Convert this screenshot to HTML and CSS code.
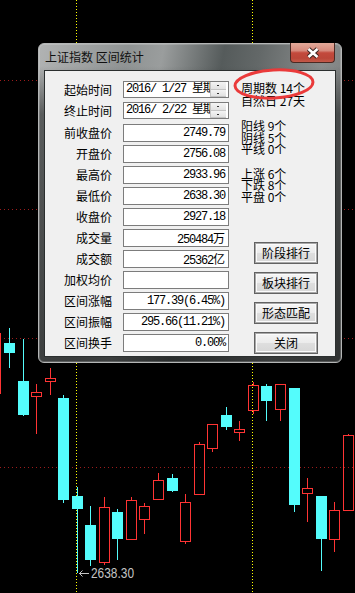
FILE: index.html
```html
<!DOCTYPE html>
<html>
<head>
<meta charset="utf-8">
<title>上证指数 区间统计</title>
<link rel="stylesheet" href="styles.css">
</head>
<body>
<svg class="chart" width="355" height="593" viewBox="0 0 355 593">
    <!-- price grid -->
    <g class="grid-h">
        <line x1="0" y1="80.5" x2="355" y2="80.5"/>
        <line x1="0" y1="209.5" x2="355" y2="209.5"/>
        <line x1="0" y1="338.5" x2="355" y2="338.5"/>
        <line x1="0" y1="467.5" x2="355" y2="467.5"/>
    </g>
    <!-- range start / end markers -->
    <g class="grid-v">
        <line x1="76.5" y1="0" x2="76.5" y2="593"/>
        <line x1="252.5" y1="0" x2="252.5" y2="593"/>
    </g>

    <!-- falling days: filled cyan -->
    <g class="down">
        <line x1="9.5" y1="328" x2="9.5" y2="368"/><rect x="4" y="343" width="11" height="10"/>
        <line x1="23.5" y1="339" x2="23.5" y2="416"/><rect x="18" y="381" width="11" height="34"/>
        <line x1="63.5" y1="395" x2="63.5" y2="503"/><rect x="58" y="398" width="11" height="102"/>
        <line x1="77.5" y1="487" x2="77.5" y2="573"/><rect x="72" y="496" width="11" height="13"/>
        <line x1="90.5" y1="506" x2="90.5" y2="566"/><rect x="85" y="525" width="11" height="35"/>
        <line x1="117.5" y1="509" x2="117.5" y2="560"/><rect x="112" y="512" width="11" height="27"/>
        <line x1="172.5" y1="474" x2="172.5" y2="492"/><rect x="167" y="478" width="11" height="13"/>
        <line x1="226.5" y1="407" x2="226.5" y2="430"/><rect x="221" y="415" width="11" height="12"/>
        <line x1="266.5" y1="384" x2="266.5" y2="421"/><rect x="261" y="386" width="11" height="15"/>
        <line x1="294.5" y1="388" x2="294.5" y2="512"/><rect x="289" y="388" width="11" height="117"/>
        <line x1="321.5" y1="496" x2="321.5" y2="571"/><rect x="316" y="496" width="11" height="43"/>
    </g>

    <!-- rising days: hollow red -->
    <g class="up">
        <line x1="0.5" y1="333" x2="0.5" y2="394"/>
        <line x1="36.5" y1="384" x2="36.5" y2="392"/><line x1="36.5" y1="397" x2="36.5" y2="434"/><rect x="31.5" y="392.5" width="10" height="4"/>
        <line x1="50.5" y1="368" x2="50.5" y2="378"/><line x1="50.5" y1="382" x2="50.5" y2="395"/><rect x="45.5" y="378.5" width="10" height="3"/>
        <line x1="104.5" y1="497" x2="104.5" y2="507"/><line x1="104.5" y1="563" x2="104.5" y2="565"/><rect x="99.5" y="507.5" width="10" height="55"/>
        <line x1="131.5" y1="497" x2="131.5" y2="500"/><rect x="126.5" y="500.5" width="10" height="39"/>
        <line x1="144.5" y1="503" x2="144.5" y2="506"/><line x1="144.5" y1="520" x2="144.5" y2="534"/><rect x="139.5" y="506.5" width="10" height="13"/>
        <line x1="158.5" y1="473" x2="158.5" y2="480"/><rect x="153.5" y="480.5" width="10" height="19"/>
        <line x1="185.5" y1="494" x2="185.5" y2="502"/><line x1="185.5" y1="542" x2="185.5" y2="544"/><rect x="180.5" y="502.5" width="10" height="39"/>
        <line x1="199.5" y1="442" x2="199.5" y2="444"/><rect x="194.5" y="444.5" width="10" height="50"/>
        <line x1="212.5" y1="449" x2="212.5" y2="452"/><rect x="207.5" y="424.5" width="10" height="24"/>
        <line x1="239.5" y1="421" x2="239.5" y2="429"/><line x1="239.5" y1="433" x2="239.5" y2="441"/><rect x="234.5" y="429.5" width="10" height="3"/>
        <line x1="253.5" y1="382" x2="253.5" y2="385"/><line x1="253.5" y1="411" x2="253.5" y2="414"/><rect x="248.5" y="385.5" width="10" height="25"/>
        <line x1="280.5" y1="410" x2="280.5" y2="421"/><rect x="275.5" y="384.5" width="10" height="25"/>
        <line x1="307.5" y1="478" x2="307.5" y2="488"/><line x1="307.5" y1="494" x2="307.5" y2="522"/><rect x="302.5" y="488.5" width="10" height="5"/>
        <line x1="334.5" y1="502" x2="334.5" y2="510"/><line x1="334.5" y1="540" x2="334.5" y2="552"/><rect x="329.5" y="510.5" width="10" height="29"/>
        <line x1="348.5" y1="434" x2="348.5" y2="435"/><rect x="343.5" y="435.5" width="10" height="75"/>
    </g>

    <!-- lowest price in range -->
    <g class="low-mark">
        <line x1="79" y1="573.5" x2="89" y2="573.5"/>
        <polyline points="82.5,570.5 79.5,573.5 82.5,576.5"/>
        <text x="91" y="578" textLength="43" lengthAdjust="spacingAndGlyphs">2638.30</text>
    </g>
</svg>

<div class="dialog">
    <div class="titlebar">
        <span class="title">上证指数 区间统计</span>
        <div class="close">
            <svg width="14" height="12" viewBox="0 0 14 12">
                <path class="x-edge" d="M2.5 2 L11.5 10 M11.5 2 L2.5 10"/>
                <path class="x-face" d="M2.5 2 L11.5 10 M11.5 2 L2.5 10"/>
            </svg>
        </div>
    </div>
    <div class="client">
        <div class="form">
            <div class="row date-row">
                <span class="label">起始时间</span>
                <div class="box date-box"><span class="date-text">2016/ 1/27 星期</span><div class="spin"><i></i><i></i></div></div>
            </div>
            <div class="row date-row">
                <span class="label">终止时间</span>
                <div class="box date-box"><span class="date-text">2016/ 2/22 星期</span><div class="spin"><i></i><i></i></div></div>
            </div>
            <div class="row first-value">
                <span class="label">前收盘价</span><div class="box value">2749.79</div>
            </div>
            <div class="row">
                <span class="label">开盘价</span><div class="box value">2756.08</div>
            </div>
            <div class="row">
                <span class="label">最高价</span><div class="box value">2933.96</div>
            </div>
            <div class="row">
                <span class="label">最低价</span><div class="box value">2638.30</div>
            </div>
            <div class="row">
                <span class="label">收盘价</span><div class="box value">2927.18</div>
            </div>
            <div class="row">
                <span class="label">成交量</span><div class="box value">250484<span class="unit">万</span></div>
            </div>
            <div class="row">
                <span class="label">成交额</span><div class="box value">25362<span class="unit">亿</span></div>
            </div>
            <div class="row">
                <span class="label">加权均价</span><div class="box value"></div>
            </div>
            <div class="row">
                <span class="label">区间涨幅</span><div class="box value">177.39(6.45%)</div>
            </div>
            <div class="row">
                <span class="label">区间振幅</span><div class="box value">295.66(11.21%)</div>
            </div>
            <div class="row">
                <span class="label">区间换手</span><div class="box value">0.00%</div>
            </div>
        </div>

        <div class="side">
            <div class="stats stats-top">
                <div>周期数 14个</div>
                <div>自然日 27天</div>
            </div>
            <div class="stats">
                <div>阳线 9个</div>
                <div>阴线 5个</div>
                <div>平线 0个</div>
            </div>
            <div class="stats">
                <div>上涨 6个</div>
                <div>下跌 8个</div>
                <div>平盘 0个</div>
            </div>
            <div class="buttons">
                <div class="btn">阶段排行</div>
                <div class="btn">板块排行</div>
                <div class="btn">形态匹配</div>
                <div class="btn">关闭</div>
            </div>
        </div>
    </div>
</div>

<svg class="mark" width="84" height="36" viewBox="0 0 84 36">
    <ellipse cx="42" cy="18" rx="39" ry="14" transform="rotate(-3 42 18)"/>
</svg>
</body>
</html>
```

FILE: styles.css
```css
body {
    margin: 0;
    width: 355px;
    height: 593px;
    overflow: hidden;
    position: relative;
    background: #000;
    font-family: "Noto Sans CJK SC", sans-serif;
    color: #000;
}

/* chart behind the dialog */
.chart { display: block; }

.grid-h line {
    stroke: #9c1c1c;
    stroke-dasharray: 1 3;
}
.grid-v line {
    stroke: #ffff00;
    stroke-dasharray: 1 2;
}

.down rect { fill: #54fcfc; }
.down line { stroke: #54fcfc; stroke-width: 1; }

.up rect { fill: none; stroke: #ff3434; stroke-width: 1; }
.up line { stroke: #ff3434; stroke-width: 1; }

.low-mark line,
.low-mark polyline {
    stroke: #c4c4c4;
    stroke-width: 1;
    fill: none;
}
.low-mark text {
    fill: #c4c4c4;
    font-family: "Liberation Sans", sans-serif;
    font-size: 14px;
}

/* the statistics window */
.dialog {
    position: absolute;
    left: 38px;
    top: 43px;
    width: 304px;
    height: 320px;
    box-sizing: border-box;
    border: 1px solid #b4b6b6;
    border-radius: 6px;
    padding: 0 5px 5px;
    display: flex;
    flex-direction: column;
    background:
        linear-gradient(to bottom, rgba(0,0,0,0) 0, rgba(0,0,0,0) 22px, rgba(24,26,26,.55) 70px, rgba(24,26,26,.72) 100%),
        linear-gradient(100deg, #b1b3b3 0%, #8f9393 25%, #9a9d9d 35%, #555b5b 52%, #636868 62%, #8a8d8d 80%, #6c7070 100%);
    box-shadow: inset 0 0 0 1px rgba(255,255,255,.18);
}

.titlebar {
    height: 26px;
    display: flex;
    align-items: center;
    padding-left: 1px;
}

.title {
    flex: 1;
    font-size: 12px;
    line-height: 14px;
    color: #101010;
}

.close {
    align-self: flex-start;
    margin: -1px 1px 0 0;
    width: 45px;
    height: 20px;
    box-sizing: border-box;
    border: 1px solid #4b2923;
    border-top: none;
    border-radius: 0 0 4px 4px;
    background: linear-gradient(#e2a999 0%, #d68a7c 40%, #c3493c 52%, #bb4638 80%, #c45a4a 100%);
    display: flex;
    align-items: center;
    justify-content: center;
}

.x-edge { stroke: #3a2420; stroke-width: 4.6; fill: none; }
.x-face { stroke: #fff; stroke-width: 2.6; fill: none; }

.client {
    flex: 1;
    border: 1px solid #2b2f2f;
    background: #f0f0f0;
    display: flex;
}

/* left: labelled fields */
.form {
    padding-top: 10px;
    display: flex;
    flex-direction: column;
}

.row {
    display: flex;
    align-items: center;
    height: 18px;
    margin-top: 3px;
}
.date-row { height: 17px; margin-top: 0; }
.date-row + .date-row { margin-top: 4px; }
.first-value { margin-top: 5px; }

.label {
    width: 67px;
    text-align: right;
    font-size: 12px;
    line-height: 16px;
    white-space: nowrap;
}

.box {
    margin-left: 11px;
    width: 106px;
    height: 100%;
    box-sizing: border-box;
    border: 1px solid #7c7c7c;
    background: #fff;
}

.value {
    padding-right: 3px;
    text-align: right;
    font-family: "Liberation Mono", monospace;
    font-size: 12px;
    letter-spacing: -1.2px;
    line-height: 16px;
    white-space: nowrap;
}

.unit {
    font-family: "Noto Sans CJK SC", sans-serif;
    font-size: 12px;
    letter-spacing: 0;
}

.date-box {
    display: flex;
    overflow: hidden;
}

.date-text {
    flex: 1;
    overflow: hidden;
    white-space: nowrap;
    padding-left: 2px;
    font-family: "Liberation Mono", "Noto Sans CJK SC", monospace;
    font-size: 12px;
    letter-spacing: -1.2px;
    line-height: 15px;
}

.spin {
    width: 15px;
    margin: 0 2px 0 0;
    display: flex;
    flex-direction: column;
    border-left: 1px solid #c4c4c4;
}

.spin i {
    flex: 1;
    position: relative;
    background: linear-gradient(#f4f4f4, #e2e2e2);
    border-bottom: 1px solid #c4c4c4;
}

.spin i::after {
    content: "";
    position: absolute;
    left: 6px;
    top: 3px;
    width: 2px;
    height: 1px;
    background: #333;
}

/* right: counts and actions */
.side {
    margin-left: 12px;
    padding-top: 10px;
    display: flex;
    flex-direction: column;
}

.stats {
    font-size: 12px;
    line-height: 11.5px;
    margin-top: 13px;
    white-space: nowrap;
}
.stats-top {
    line-height: 13px;
    margin-top: 0;
}

.buttons {
    margin: 40px 0 0 13px;
    display: flex;
    flex-direction: column;
    gap: 8px;
}

.btn {
    width: 64px;
    height: 22px;
    box-sizing: border-box;
    border: 1px solid #626262;
    box-shadow: inset 0 0 0 1px #a8a8a8, inset 0 0 0 2px #fbfbfb;
    background: linear-gradient(#f6f6f6, #ebebeb 50%, #dedede 51%, #d6d6d6);
    font-size: 12px;
    line-height: 20px;
    text-align: center;
}

/* hand-drawn red ring around the period count */
.mark {
    position: absolute;
    left: 232px;
    top: 66px;
    overflow: visible;
}

.mark ellipse {
    fill: none;
    stroke: #ea3a3a;
    stroke-width: 3;
}
```
